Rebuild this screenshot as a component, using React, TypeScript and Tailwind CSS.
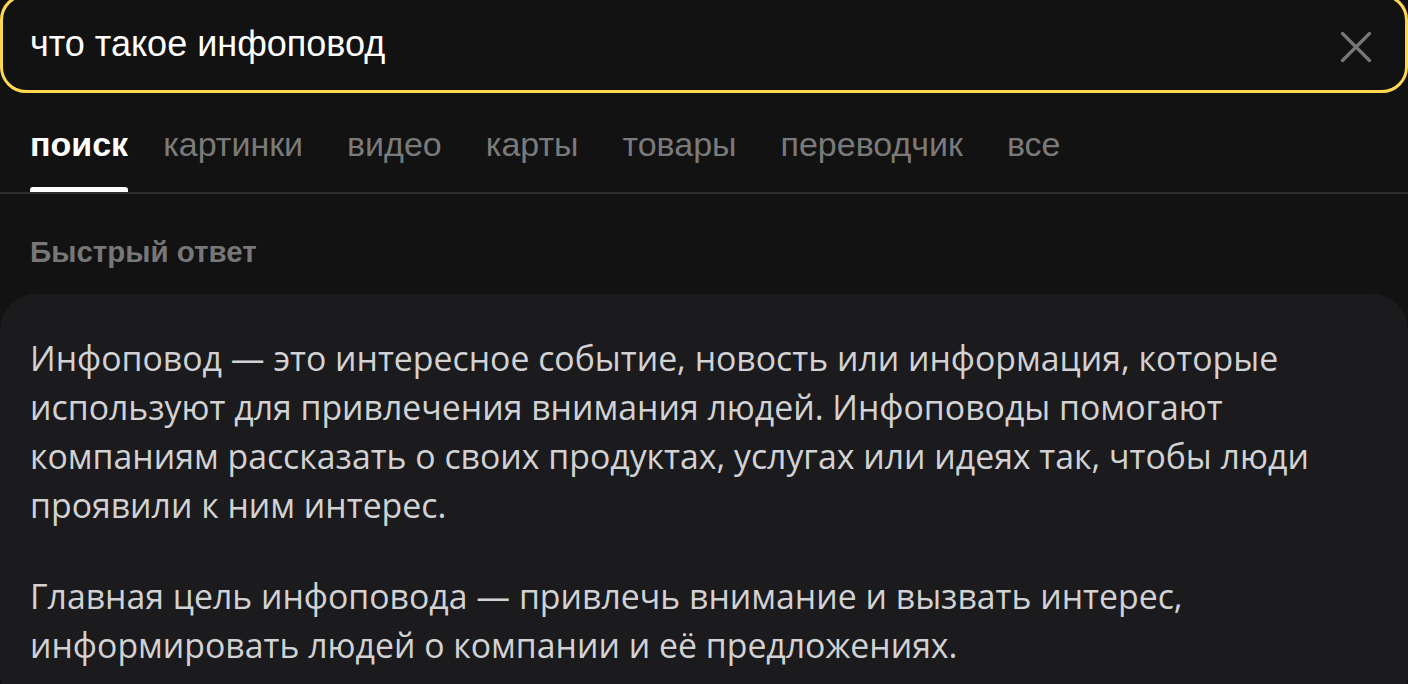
import React from 'react';

const tabs = ['поиск', 'картинки', 'видео', 'карты', 'товары', 'переводчик', 'все'];

export default function App() {
  return (
    <div className="h-[684px] w-[1408px] overflow-hidden bg-[#121212]">
      {/* Search box */}
      <div className="-mt-[6px] flex h-[99px] items-center justify-between rounded-[26px] border-[3px] border-[#fed94f] pl-[27px] pr-[33px]">
        <span className="text-[36px] text-white [font-family:'Liberation_Sans',Arial,sans-serif]">что такое инфоповод</span>
        <svg width="32" height="32" viewBox="0 0 32 32" className="mt-[6px]">
          <path d="M2.5 2.5L29.5 29.5M29.5 2.5L2.5 29.5" stroke="#777" strokeWidth="3.2" strokeLinecap="round" />
        </svg>
      </div>

      {/* Tabs */}
      <div className="flex h-[101px] items-stretch gap-[44px] border-b-2 border-[#2e2e2e] px-[30px] [font-family:'Liberation_Sans',Arial,sans-serif]">
        {tabs.map((t, i) => (
          <div key={t} className={i === 0 ? 'relative -mr-[9px] flex items-center pt-[4px]' : 'relative flex items-center pt-[4px]'}>
            <span className={i === 0 ? 'text-[34px] font-bold text-white' : 'text-[34px] text-[#7a7a7a]'}>{t}</span>
            {i === 0 && <div className="absolute bottom-0 left-0 right-0 h-[5px] rounded-t-[3px] bg-white" />}
          </div>
        ))}
      </div>

      <div className="px-[30px] pb-[20px] pt-[36px] text-[29.5px] font-bold text-[#777] [font-family:'Liberation_Sans',Arial,sans-serif]">
        Быстрый ответ
      </div>

      {/* Answer card */}
      <div className="rounded-[36px] bg-[#1b1b1d] pb-[40px] pl-[30px] pr-[18px] pt-[40px] text-[33.8px] leading-[49px] text-[#d2d2d4] [font-family:'Open_Sans','Noto_Sans',sans-serif]">
        <p>
          Инфоповод — это интересное событие, новость или информация, которые используют для привлечения внимания людей. Инфоповоды помогают компаниям рассказать о своих продуктах, услугах или идеях так, чтобы люди проявили к ним интерес.
        </p>
        <p className="mt-[42px]">
          Главная цель инфоповода — привлечь внимание и вызвать интерес, информировать людей о компании и её предложениях.
        </p>
      </div>
    </div>
  );
}
